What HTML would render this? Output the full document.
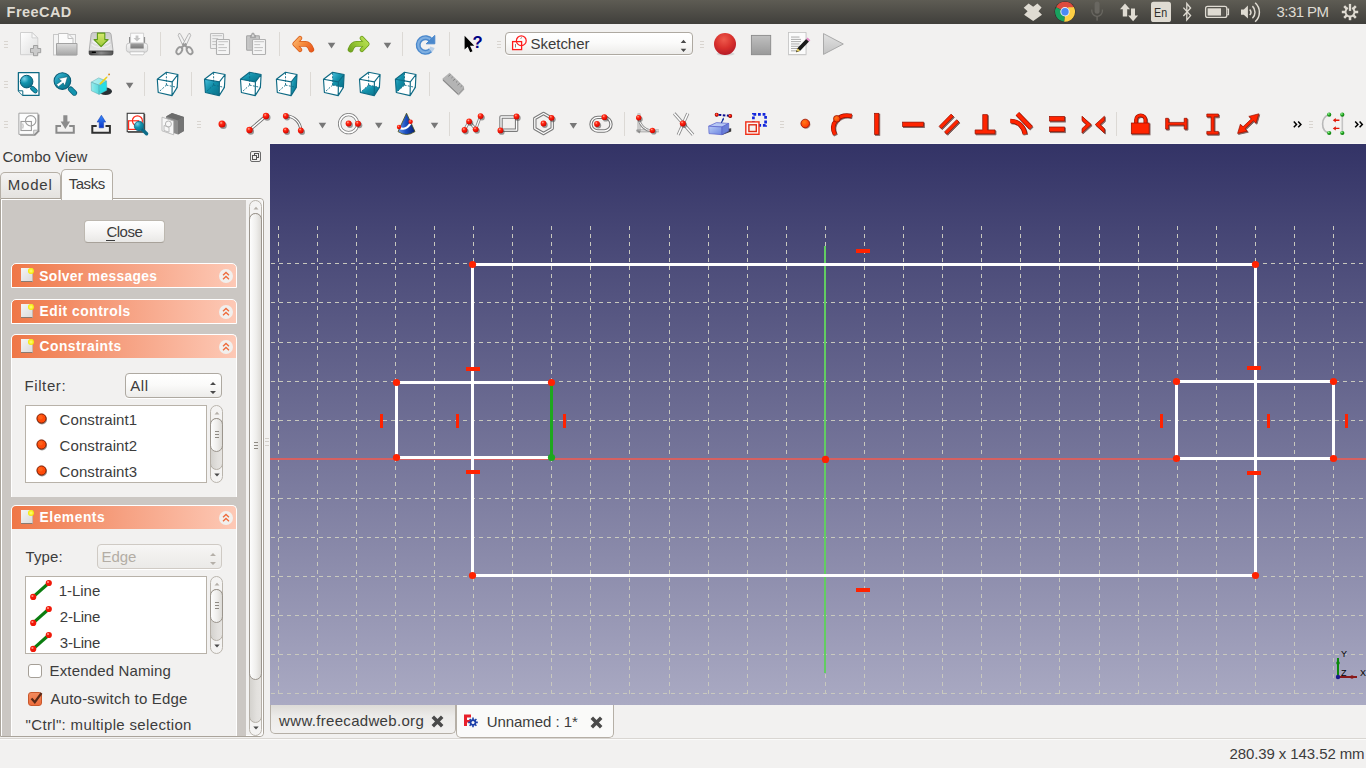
<!DOCTYPE html>
<html lang="en"><head><meta charset="utf-8"><title>FreeCAD</title>
<style>
html,body{margin:0;padding:0;width:1366px;height:768px;overflow:hidden;background:#f2f1f0;font-family:"Liberation Sans", sans-serif;}
#root{position:relative;width:1366px;height:768px;overflow:hidden;background:#f2f1f0}
#root div,#root svg,#root span{position:absolute;box-sizing:border-box}
.t{white-space:pre;line-height:1;font-family:"Liberation Sans", sans-serif}

.bar{left:0;top:0;width:1366px;height:24px;background:linear-gradient(#5e5c54,#403f3b);}
.hd{width:4px;height:1px;background:#d9d5d0}
.sep{width:1px;height:24px;background:#dcd9d5}
.combo{border:1px solid #aea9a1;border-radius:4px;background:linear-gradient(#ffffff,#fbfbfa 45%,#edecea);box-shadow:0 1px 0 #fff}
.btn{border:1px solid #bdb8b0;border-bottom-color:#a8a29a;border-radius:4px;background:linear-gradient(#ffffff,#f6f5f4 50%,#e9e8e6)}
.hdr{left:11px;width:226px;height:25px;border:1px solid #fff;border-bottom:0;border-radius:5px 5px 0 0;background:linear-gradient(90deg,#ef7747,#f6a182 50%,#fdc9b6)}
.hdrc{border-bottom:1px solid #fff;}
.grp{left:11px;width:226px;background:#f2f1f0;border-left:1px solid #fff;border-right:1px solid #fff}
.list{background:#fff;border:1px solid #b8b2a9}
.sb{border:1px solid #bab5ad;border-radius:7px;background:#f4f3f2}
.tr{border:1px solid #b4aea6;background:linear-gradient(90deg,#d4d2ce,#e2e0dd 60%,#e6e4e1)}
.sl{border:1px solid #9b958d;border-radius:6px;background:linear-gradient(90deg,#fdfdfd,#efeeec 55%,#dcdad6)}
.cb{width:14px;height:14px;border:1px solid #a59f97;border-radius:3px;background:#fff}

</style></head><body><div id="root">
<div class="bar"></div>
<div class="hd" style="left:4px;top:41px"></div>
<div class="hd" style="left:4px;top:44px"></div>
<div class="hd" style="left:4px;top:47px"></div>
<div class="hd" style="left:497px;top:41px"></div>
<div class="hd" style="left:497px;top:44px"></div>
<div class="hd" style="left:497px;top:47px"></div>
<div class="hd" style="left:700px;top:41px"></div>
<div class="hd" style="left:700px;top:44px"></div>
<div class="hd" style="left:700px;top:47px"></div>
<div class="hd" style="left:4px;top:81px"></div>
<div class="hd" style="left:4px;top:84px"></div>
<div class="hd" style="left:4px;top:87px"></div>
<div class="hd" style="left:4px;top:121px"></div>
<div class="hd" style="left:4px;top:124px"></div>
<div class="hd" style="left:4px;top:127px"></div>
<div class="hd" style="left:197px;top:121px"></div>
<div class="hd" style="left:197px;top:124px"></div>
<div class="hd" style="left:197px;top:127px"></div>
<div class="hd" style="left:780px;top:121px"></div>
<div class="hd" style="left:780px;top:124px"></div>
<div class="hd" style="left:780px;top:127px"></div>
<div class="hd" style="left:1309px;top:121px"></div>
<div class="hd" style="left:1309px;top:124px"></div>
<div class="hd" style="left:1309px;top:127px"></div>
<div class="sep" style="left:160px;top:32px"></div>
<div class="sep" style="left:279px;top:32px"></div>
<div class="sep" style="left:402px;top:32px"></div>
<div class="sep" style="left:449px;top:32px"></div>
<div class="sep" style="left:144px;top:72px"></div>
<div class="sep" style="left:191px;top:72px"></div>
<div class="sep" style="left:310px;top:72px"></div>
<div class="sep" style="left:429px;top:72px"></div>
<div class="sep" style="left:449px;top:112px"></div>
<div class="sep" style="left:624px;top:112px"></div>
<div class="sep" style="left:1116px;top:112px"></div>
<div class="combo" style="left:505px;top:32px;width:188px;height:23px"></div>
<div style="left:0;top:198px;width:264px;height:539px;border:1px solid #aaa49b;border-radius:0 4px 4px 0;background:#f2f1f0"></div>
<div style="left:1px;top:199px;width:262px;height:537px;border:1px solid #fff;border-radius:0 3px 3px 0;"></div>
<div style="left:2px;top:200px;width:244px;height:536px;background:#cbc7c3"></div>
<div style="left:0px;top:172px;width:61px;height:26px;border:1px solid #b5afa6;border-bottom:0;border-radius:5px 5px 0 0;background:linear-gradient(#f4f3f2,#e4e2df)"></div>
<div style="left:61px;top:169px;width:52px;height:31px;border:1px solid #b5afa6;border-bottom:0;border-radius:5px 5px 0 0;background:#fafaf9"></div>
<div style="left:250px;top:151px;width:11px;height:11px;border:1px solid #6a6a6a;border-radius:2px"></div>
<div style="left:254px;top:153px;width:5px;height:5px;border:1px solid #555;"></div>
<div style="left:252px;top:155px;width:5px;height:5px;border:1px solid #555;background:#f2f1f0"></div>
<div class="btn" style="left:84px;top:220px;width:81px;height:23px"></div>
<div style="left:106px;top:240px;width:9px;height:1px;background:#3c3c3c"></div>
<div class="hdr hdrc" style="top:263px;height:25px"></div>
<div style="left:21px;top:268px;width:12px;height:14px;background:linear-gradient(135deg,#f4f4f4,#dcdcdc);border-bottom:1px solid #8a7a70;border-right:1px solid #c8b8b0"></div>
<div style="left:28px;top:268px;width:6px;height:6px;border-radius:3px;background:radial-gradient(#ffff80,#f4e800 70%,#e8d000)"></div>
<div style="left:219px;top:269px;width:14px;height:14px;border-radius:7px;background:#f1efed"></div>
<svg style="left:219px;top:269px" width="14" height="14" viewBox="0 0 14 14"><path d="M4 6.2 L7 3.4 L10 6.2 M4 10.2 L7 7.4 L10 10.2" fill="none" stroke="#ee6b3b" stroke-width="1.3"/></svg>
<div class="hdr hdrc" style="top:299px;height:25px"></div>
<div style="left:21px;top:304px;width:12px;height:14px;background:linear-gradient(135deg,#f4f4f4,#dcdcdc);border-bottom:1px solid #8a7a70;border-right:1px solid #c8b8b0"></div>
<div style="left:28px;top:304px;width:6px;height:6px;border-radius:3px;background:radial-gradient(#ffff80,#f4e800 70%,#e8d000)"></div>
<div style="left:219px;top:305px;width:14px;height:14px;border-radius:7px;background:#f1efed"></div>
<svg style="left:219px;top:305px" width="14" height="14" viewBox="0 0 14 14"><path d="M4 6.2 L7 3.4 L10 6.2 M4 10.2 L7 7.4 L10 10.2" fill="none" stroke="#ee6b3b" stroke-width="1.3"/></svg>
<div class="hdr" style="top:334px;height:24px"></div>
<div style="left:21px;top:339px;width:12px;height:14px;background:linear-gradient(135deg,#f4f4f4,#dcdcdc);border-bottom:1px solid #8a7a70;border-right:1px solid #c8b8b0"></div>
<div style="left:28px;top:339px;width:6px;height:6px;border-radius:3px;background:radial-gradient(#ffff80,#f4e800 70%,#e8d000)"></div>
<div style="left:219px;top:340px;width:14px;height:14px;border-radius:7px;background:#f1efed"></div>
<svg style="left:219px;top:340px" width="14" height="14" viewBox="0 0 14 14"><path d="M4 6.2 L7 3.4 L10 6.2 M4 10.2 L7 7.4 L10 10.2" fill="none" stroke="#ee6b3b" stroke-width="1.3"/></svg>
<div class="hdr" style="top:505px;height:24px"></div>
<div style="left:21px;top:510px;width:12px;height:14px;background:linear-gradient(135deg,#f4f4f4,#dcdcdc);border-bottom:1px solid #8a7a70;border-right:1px solid #c8b8b0"></div>
<div style="left:28px;top:510px;width:6px;height:6px;border-radius:3px;background:radial-gradient(#ffff80,#f4e800 70%,#e8d000)"></div>
<div style="left:219px;top:511px;width:14px;height:14px;border-radius:7px;background:#f1efed"></div>
<svg style="left:219px;top:511px" width="14" height="14" viewBox="0 0 14 14"><path d="M4 6.2 L7 3.4 L10 6.2 M4 10.2 L7 7.4 L10 10.2" fill="none" stroke="#ee6b3b" stroke-width="1.3"/></svg>
<div class="grp" style="top:358px;height:139px"></div>
<div class="grp" style="top:529px;height:207px"></div>
<div class="combo" style="left:125px;top:373px;width:97px;height:25px"></div>
<svg style="left:209px;top:381px" width="8" height="14" viewBox="0 0 8 14"><path d="M1 4 L4 1 L7 4Z M1 10 L4 13 L7 10Z" fill="#4a4a4a"/></svg>
<div class="list" style="left:25px;top:405px;width:182px;height:78px"></div>
<div class="combo" style="left:97px;top:544px;width:125px;height:25px;border-color:#cfcac4;background:linear-gradient(#f7f6f5,#f1f0ee 45%,#ebeae8)"></div>
<svg style="left:209px;top:552px" width="8" height="14" viewBox="0 0 8 14"><path d="M1 4 L4 1 L7 4Z M1 10 L4 13 L7 10Z" fill="#b5b0a9"/></svg>
<div class="list" style="left:25px;top:576px;width:182px;height:78px"></div>
<div class="sb" style="left:210px;top:405px;width:13px;height:78px;border-radius:6.5px"></div>
<div class="tr" style="left:210px;top:418px;width:13px;height:52px;border-radius:6.5px"></div>
<div class="sl" style="left:210px;top:418px;width:13px;height:34px;border-radius:6.5px"></div>
<svg style="left:213.5px;top:411px" width="6" height="4" viewBox="0 0 6 4"><path d="M0.5 3.5 L3 0.8 L5.5 3.5Z" fill="#b4afa8"/></svg>
<svg style="left:213.5px;top:473px" width="6" height="4" viewBox="0 0 6 4"><path d="M0.3 0.5 L3 3.6 L5.7 0.5Z" fill="#4a4a4a"/></svg>
<div style="left:214.5px;top:431px;width:4px;height:1px;background:#8f8a83"></div>
<div style="left:214.5px;top:434px;width:4px;height:1px;background:#8f8a83"></div>
<div style="left:214.5px;top:437px;width:4px;height:1px;background:#8f8a83"></div>
<div class="sb" style="left:210px;top:576px;width:13px;height:78px;border-radius:6.5px"></div>
<div class="tr" style="left:210px;top:589px;width:13px;height:52px;border-radius:6.5px"></div>
<div class="sl" style="left:210px;top:589px;width:13px;height:34px;border-radius:6.5px"></div>
<svg style="left:213.5px;top:582px" width="6" height="4" viewBox="0 0 6 4"><path d="M0.5 3.5 L3 0.8 L5.5 3.5Z" fill="#b4afa8"/></svg>
<svg style="left:213.5px;top:644px" width="6" height="4" viewBox="0 0 6 4"><path d="M0.3 0.5 L3 3.6 L5.7 0.5Z" fill="#4a4a4a"/></svg>
<div style="left:214.5px;top:602px;width:4px;height:1px;background:#8f8a83"></div>
<div style="left:214.5px;top:605px;width:4px;height:1px;background:#8f8a83"></div>
<div style="left:214.5px;top:608px;width:4px;height:1px;background:#8f8a83"></div>
<div class="sb" style="left:249px;top:200px;width:13px;height:536px;border-radius:6.5px"></div>
<div class="tr" style="left:249px;top:213px;width:13px;height:510px;border-radius:6.5px"></div>
<div class="sl" style="left:249px;top:213px;width:13px;height:467px;border-radius:6.5px"></div>
<svg style="left:252.5px;top:206px" width="6" height="4" viewBox="0 0 6 4"><path d="M0.5 3.5 L3 0.8 L5.5 3.5Z" fill="#b4afa8"/></svg>
<svg style="left:252.5px;top:726px" width="6" height="4" viewBox="0 0 6 4"><path d="M0.3 0.5 L3 3.6 L5.7 0.5Z" fill="#4a4a4a"/></svg>
<div style="left:253.5px;top:442px;width:4px;height:1px;background:#8f8a83"></div>
<div style="left:253.5px;top:445px;width:4px;height:1px;background:#8f8a83"></div>
<div style="left:253.5px;top:448px;width:4px;height:1px;background:#8f8a83"></div>
<div style="left:265px;top:438px;width:4px;height:1px;background:#d3cfca"></div>
<div style="left:265px;top:441px;width:4px;height:1px;background:#d3cfca"></div>
<div style="left:265px;top:445px;width:4px;height:1px;background:#d3cfca"></div>
<div class="cb" style="left:28px;top:664px"></div>
<div class="cb" style="left:28px;top:692px;background:linear-gradient(#f28a5e,#ee6d3c);border-color:#c9582c"></div>
<svg style="left:28px;top:690px" width="16" height="16" viewBox="0 0 16 16"><path d="M3.5 8.5 L6.8 12.2 L13.5 3" fill="none" stroke="#5a2a18" stroke-width="2.2"/></svg>
<svg style="left:34px;top:410.8px" width="16" height="16" viewBox="0 0 16 16"><circle cx="8" cy="8.5" r="5" fill="#55504c" opacity=".6"/><circle cx="7.5" cy="7.5" r="4.6" fill="#ff4a08" stroke="#7a1c00" stroke-width="1"/><circle cx="6.5" cy="6.3" r="2.2" fill="#ff6a20" opacity=".7"/></svg>
<svg style="left:34px;top:436.8px" width="16" height="16" viewBox="0 0 16 16"><circle cx="8" cy="8.5" r="5" fill="#55504c" opacity=".6"/><circle cx="7.5" cy="7.5" r="4.6" fill="#ff4a08" stroke="#7a1c00" stroke-width="1"/><circle cx="6.5" cy="6.3" r="2.2" fill="#ff6a20" opacity=".7"/></svg>
<svg style="left:34px;top:462.8px" width="16" height="16" viewBox="0 0 16 16"><circle cx="8" cy="8.5" r="5" fill="#55504c" opacity=".6"/><circle cx="7.5" cy="7.5" r="4.6" fill="#ff4a08" stroke="#7a1c00" stroke-width="1"/><circle cx="6.5" cy="6.3" r="2.2" fill="#ff6a20" opacity=".7"/></svg>
<svg style="left:28px;top:577.1px" width="26" height="26" viewBox="0 0 26 26"><path d="M5.2 19.9 L20.8 6" stroke="#0b7d10" stroke-width="3.2"/><circle cx="5.2" cy="19.9" r="3.1" fill="#f01808"/><circle cx="20.8" cy="6" r="3.1" fill="#f01808"/><circle cx="4.4" cy="19" r="1.1" fill="#ff9080"/><circle cx="20" cy="5.1" r="1.1" fill="#ff9080"/></svg>
<svg style="left:28px;top:603.1px" width="26" height="26" viewBox="0 0 26 26"><path d="M5.2 19.9 L20.8 6" stroke="#0b7d10" stroke-width="3.2"/><circle cx="5.2" cy="19.9" r="3.1" fill="#f01808"/><circle cx="20.8" cy="6" r="3.1" fill="#f01808"/><circle cx="4.4" cy="19" r="1.1" fill="#ff9080"/><circle cx="20" cy="5.1" r="1.1" fill="#ff9080"/></svg>
<svg style="left:28px;top:629.1px" width="26" height="26" viewBox="0 0 26 26"><path d="M5.2 19.9 L20.8 6" stroke="#0b7d10" stroke-width="3.2"/><circle cx="5.2" cy="19.9" r="3.1" fill="#f01808"/><circle cx="20.8" cy="6" r="3.1" fill="#f01808"/><circle cx="4.4" cy="19" r="1.1" fill="#ff9080"/><circle cx="20" cy="5.1" r="1.1" fill="#ff9080"/></svg>
<div style="left:0;top:737px;width:270px;height:31px;background:#f2f1f0"></div>
<div style="left:0;top:738px;width:1366px;height:1px;background:#d9d6d2"></div>
<div style="left:0;top:739px;width:1366px;height:1px;background:#fbfbfa"></div>
<div style="left:270px;top:705px;width:186px;height:29px;border:1px solid #b5afa6;border-top:0;border-radius:0 0 5px 5px;background:linear-gradient(#dddbd7,#ecebe9 40%,#f2f1f0)"></div>
<div style="left:456px;top:705px;width:158px;height:33px;border:1px solid #b5afa6;border-top:0;border-radius:0 0 5px 5px;background:#fafaf9"></div>
<svg style="left:431px;top:715px" width="13" height="13" viewBox="0 0 13 13"><path d="M1.8 1.8 L11.2 11.2 M11.2 1.8 L1.8 11.2" stroke="#4a4a4a" stroke-width="3.5"/></svg>
<svg style="left:590px;top:715.5px" width="13" height="13" viewBox="0 0 13 13"><path d="M1.8 1.8 L11.2 11.2 M11.2 1.8 L1.8 11.2" stroke="#4a4a4a" stroke-width="3.5"/></svg>
<svg style="left:463px;top:713px" width="16" height="16" viewBox="0 0 16 16"><path d="M1 1.5 h7 v3 h-4 v2.5 h3 v2.5 h-3 v3.5 h-3z" fill="#e8202a"/><g fill="#1c3fa8"><circle cx="10" cy="9.4" r="3.2"/><g stroke="#1c3fa8" stroke-width="1.6"><path d="M10 4.6V14.2M5.2 9.4H14.8M6.6 6L13.4 12.8M13.4 6L6.6 12.8"/></g></g><circle cx="10" cy="9.4" r="1.5" fill="#fafaf9"/></svg>
<div style="left:270px;top:144px;width:1096px;height:561px;background:linear-gradient(#333366,#aaaac3)"></div>
<svg style="left:270px;top:144px" width="1096" height="561" viewBox="270 144 1096 561" shape-rendering="crispEdges">
<line x1="278.5" y1="226" x2="278.5" y2="694" stroke="#c8c8be" stroke-width="1" stroke-dasharray="4 4" opacity="1"/>
<line x1="317.5" y1="226" x2="317.5" y2="694" stroke="#c8c8be" stroke-width="1" stroke-dasharray="4 4" opacity="1"/>
<line x1="356.5" y1="226" x2="356.5" y2="694" stroke="#c8c8be" stroke-width="1" stroke-dasharray="4 4" opacity="1"/>
<line x1="395.5" y1="226" x2="395.5" y2="694" stroke="#c8c8be" stroke-width="1" stroke-dasharray="4 4" opacity="1"/>
<line x1="434.5" y1="226" x2="434.5" y2="694" stroke="#c8c8be" stroke-width="1" stroke-dasharray="4 4" opacity="1"/>
<line x1="473.5" y1="226" x2="473.5" y2="694" stroke="#c8c8be" stroke-width="1" stroke-dasharray="4 4" opacity="1"/>
<line x1="512.5" y1="226" x2="512.5" y2="694" stroke="#c8c8be" stroke-width="1" stroke-dasharray="4 4" opacity="1"/>
<line x1="551.5" y1="226" x2="551.5" y2="694" stroke="#c8c8be" stroke-width="1" stroke-dasharray="4 4" opacity="1"/>
<line x1="590.5" y1="226" x2="590.5" y2="694" stroke="#c8c8be" stroke-width="1" stroke-dasharray="4 4" opacity="1"/>
<line x1="629.5" y1="226" x2="629.5" y2="694" stroke="#c8c8be" stroke-width="1" stroke-dasharray="4 4" opacity="1"/>
<line x1="669.5" y1="226" x2="669.5" y2="694" stroke="#c8c8be" stroke-width="1" stroke-dasharray="4 4" opacity="1"/>
<line x1="708.5" y1="226" x2="708.5" y2="694" stroke="#c8c8be" stroke-width="1" stroke-dasharray="4 4" opacity="1"/>
<line x1="747.5" y1="226" x2="747.5" y2="694" stroke="#c8c8be" stroke-width="1" stroke-dasharray="4 4" opacity="1"/>
<line x1="786.5" y1="226" x2="786.5" y2="694" stroke="#c8c8be" stroke-width="1" stroke-dasharray="4 4" opacity="1"/>
<line x1="825.5" y1="226" x2="825.5" y2="694" stroke="#c8c8be" stroke-width="1" stroke-dasharray="4 4" opacity="1"/>
<line x1="864.5" y1="226" x2="864.5" y2="694" stroke="#c8c8be" stroke-width="1" stroke-dasharray="4 4" opacity="1"/>
<line x1="903.5" y1="226" x2="903.5" y2="694" stroke="#c8c8be" stroke-width="1" stroke-dasharray="4 4" opacity="1"/>
<line x1="942.5" y1="226" x2="942.5" y2="694" stroke="#c8c8be" stroke-width="1" stroke-dasharray="4 4" opacity="1"/>
<line x1="981.5" y1="226" x2="981.5" y2="694" stroke="#c8c8be" stroke-width="1" stroke-dasharray="4 4" opacity="1"/>
<line x1="1020.5" y1="226" x2="1020.5" y2="694" stroke="#c8c8be" stroke-width="1" stroke-dasharray="4 4" opacity="1"/>
<line x1="1059.5" y1="226" x2="1059.5" y2="694" stroke="#c8c8be" stroke-width="1" stroke-dasharray="4 4" opacity="1"/>
<line x1="1099.5" y1="226" x2="1099.5" y2="694" stroke="#c8c8be" stroke-width="1" stroke-dasharray="4 4" opacity="1"/>
<line x1="1138.5" y1="226" x2="1138.5" y2="694" stroke="#c8c8be" stroke-width="1" stroke-dasharray="4 4" opacity="1"/>
<line x1="1177.5" y1="226" x2="1177.5" y2="694" stroke="#c8c8be" stroke-width="1" stroke-dasharray="4 4" opacity="1"/>
<line x1="1216.5" y1="226" x2="1216.5" y2="694" stroke="#c8c8be" stroke-width="1" stroke-dasharray="4 4" opacity="1"/>
<line x1="1255.5" y1="226" x2="1255.5" y2="694" stroke="#c8c8be" stroke-width="1" stroke-dasharray="4 4" opacity="1"/>
<line x1="1294.5" y1="226" x2="1294.5" y2="694" stroke="#c8c8be" stroke-width="1" stroke-dasharray="4 4" opacity="1"/>
<line x1="1333.5" y1="226" x2="1333.5" y2="694" stroke="#c8c8be" stroke-width="1" stroke-dasharray="4 4" opacity="1"/>
<line x1="271" y1="263.5" x2="1366" y2="263.5" stroke="#c8c8be" stroke-width="1" stroke-dasharray="4 4" opacity="1"/>
<line x1="271" y1="302.5" x2="1366" y2="302.5" stroke="#c8c8be" stroke-width="1" stroke-dasharray="4 4" opacity="1"/>
<line x1="271" y1="342.5" x2="1366" y2="342.5" stroke="#c8c8be" stroke-width="1" stroke-dasharray="4 4" opacity="1"/>
<line x1="271" y1="381.5" x2="1366" y2="381.5" stroke="#c8c8be" stroke-width="1" stroke-dasharray="4 4" opacity="1"/>
<line x1="271" y1="420.5" x2="1366" y2="420.5" stroke="#c8c8be" stroke-width="1" stroke-dasharray="4 4" opacity="1"/>
<line x1="271" y1="459.5" x2="1366" y2="459.5" stroke="#c8c8be" stroke-width="1" stroke-dasharray="4 4" opacity="1"/>
<line x1="271" y1="498.5" x2="1366" y2="498.5" stroke="#c8c8be" stroke-width="1" stroke-dasharray="4 4" opacity="1"/>
<line x1="271" y1="537.5" x2="1366" y2="537.5" stroke="#c8c8be" stroke-width="1" stroke-dasharray="4 4" opacity="1"/>
<line x1="271" y1="576.5" x2="1366" y2="576.5" stroke="#c8c8be" stroke-width="1" stroke-dasharray="4 4" opacity="1"/>
<line x1="271" y1="615.5" x2="1366" y2="615.5" stroke="#c8c8be" stroke-width="1" stroke-dasharray="4 4" opacity="1"/>
<line x1="271" y1="654.5" x2="1366" y2="654.5" stroke="#c8c8be" stroke-width="1" stroke-dasharray="4 4" opacity="1"/>
<line x1="271" y1="693.5" x2="1366" y2="693.5" stroke="#c8c8be" stroke-width="1" stroke-dasharray="4 4" opacity="1"/>
<rect x="270" y="458" width="1096" height="2" fill="#d66060"/>
<rect x="824" y="246" width="2" height="427" fill="#62cc62"/>
<rect x="471" y="263.0" width="786" height="3" fill="#fff"/>
<rect x="471" y="574.0" width="786" height="3" fill="#fff"/>
<rect x="471.0" y="263" width="3" height="314" fill="#fff"/>
<rect x="1254.0" y="263" width="3" height="314" fill="#fff"/>
<rect x="395" y="381.0" width="158" height="3" fill="#fff"/>
<rect x="395" y="456.0" width="158" height="3" fill="#fff"/>
<rect x="395.0" y="381" width="3" height="78" fill="#fff"/>
<rect x="550.0" y="381" width="3" height="78" fill="#1ea81e"/>
<rect x="1175" y="380.0" width="160" height="3" fill="#fff"/>
<rect x="1175" y="457.0" width="160" height="3" fill="#fff"/>
<rect x="1175.0" y="380" width="3" height="80" fill="#fff"/>
<rect x="1332.0" y="380" width="3" height="80" fill="#fff"/>
<rect x="856" y="249" width="14" height="4" fill="#ff2200"/>
<rect x="856" y="588" width="14" height="4" fill="#ff2200"/>
<rect x="466" y="367" width="14" height="4" fill="#ff2200"/>
<rect x="466" y="470" width="14" height="4" fill="#ff2200"/>
<rect x="1247" y="366" width="14" height="4" fill="#ff2200"/>
<rect x="1247" y="471" width="14" height="4" fill="#ff2200"/>
<rect x="380" y="414" width="3" height="14" fill="#ff2200"/>
<rect x="456" y="414" width="3" height="14" fill="#ff2200"/>
<rect x="563" y="414" width="3" height="14" fill="#ff2200"/>
<rect x="1160" y="414" width="3" height="14" fill="#ff2200"/>
<rect x="1267" y="414" width="3" height="14" fill="#ff2200"/>
<rect x="1345" y="414" width="3" height="14" fill="#ff2200"/>
</svg>
<svg style="left:270px;top:144px" width="1096" height="561" viewBox="270 144 1096 561">
<circle cx="472.5" cy="264.5" r="3.6" fill="#ff2200"/>
<circle cx="1255.5" cy="264.5" r="3.6" fill="#ff2200"/>
<circle cx="472.5" cy="575.5" r="3.6" fill="#ff2200"/>
<circle cx="1255.5" cy="575.5" r="3.6" fill="#ff2200"/>
<circle cx="396.5" cy="382.5" r="3.6" fill="#ff2200"/>
<circle cx="551.5" cy="382.5" r="3.6" fill="#ff2200"/>
<circle cx="396.5" cy="457.5" r="3.6" fill="#ff2200"/>
<circle cx="551.5" cy="457.5" r="3.6" fill="#1ea81e"/>
<circle cx="1176.5" cy="381.5" r="3.6" fill="#ff2200"/>
<circle cx="1333.5" cy="381.5" r="3.6" fill="#ff2200"/>
<circle cx="1176.5" cy="458.5" r="3.6" fill="#ff2200"/>
<circle cx="1333.5" cy="458.5" r="3.6" fill="#ff2200"/>
<circle cx="825.5" cy="459.4" r="3.6" fill="#ff2200"/>
<rect x="1337" y="658" width="2" height="19" fill="#0a8a0a"/><rect x="1338" y="676" width="19" height="2" fill="#8a1818"/><circle cx="1338" cy="677" r="2.2" fill="#1a1a8a"/><circle cx="1338" cy="663" r="1.8" fill="#0a8a0a"/><circle cx="1352" cy="677" r="1.8" fill="#8a1818"/>
</svg>
<div style="left:269px;top:143px;width:1097px;height:1px;background:#f7f6f5"></div>
<svg style="left:0;top:0" width="1366" height="144" viewBox="0 0 1366 144">
<defs>
<radialGradient id="rb" cx=".38" cy=".32" r=".75"><stop offset="0" stop-color="#ffb0a0"/><stop offset=".3" stop-color="#ff2a14"/><stop offset=".8" stop-color="#e00800"/><stop offset="1" stop-color="#b00000"/></radialGradient>
<radialGradient id="gb" cx=".38" cy=".32" r=".75"><stop offset="0" stop-color="#b0ffb0"/><stop offset=".4" stop-color="#20a820"/><stop offset="1" stop-color="#0a700a"/></radialGradient>
<linearGradient id="pg" x1="0" y1="0" x2="1" y2="1"><stop offset="0" stop-color="#ffffff"/><stop offset="1" stop-color="#dedede"/></linearGradient>
<linearGradient id="fg" x1="0" y1="0" x2="0" y2="1"><stop offset="0" stop-color="#dcdcdc"/><stop offset="1" stop-color="#a6a6a6"/></linearGradient>
<linearGradient id="og" gradientUnits="userSpaceOnUse" x1="293" y1="36" x2="313" y2="52"><stop offset="0" stop-color="#fcc07a"/><stop offset=".5" stop-color="#f58a3c"/><stop offset="1" stop-color="#e8501a"/></linearGradient>
<linearGradient id="gg" gradientUnits="userSpaceOnUse" x1="293" y1="36" x2="313" y2="52"><stop offset="0" stop-color="#c4e860"/><stop offset=".5" stop-color="#9ccc38"/><stop offset="1" stop-color="#6ea01e"/></linearGradient>
<linearGradient id="ga" x1="0" y1="0" x2="0" y2="1"><stop offset="0" stop-color="#d8ea70"/><stop offset="1" stop-color="#9cc838"/></linearGradient>
<radialGradient id="rec" cx=".45" cy=".3" r=".8"><stop offset="0" stop-color="#ee5a4c"/><stop offset=".5" stop-color="#d8302c"/><stop offset="1" stop-color="#aa1426"/></radialGradient>
<linearGradient id="stp" x1="0" y1="0" x2="0" y2="1"><stop offset="0" stop-color="#c0c0c0"/><stop offset="1" stop-color="#9a9a9a"/></linearGradient>
<linearGradient id="ply" x1="0" y1="0" x2="0" y2="1"><stop offset="0" stop-color="#e2e2e2"/><stop offset="1" stop-color="#c2c2c2"/></linearGradient>
<radialGradient id="tl" cx=".32" cy=".28" r=".8"><stop offset="0" stop-color="#7cd4ec"/><stop offset=".45" stop-color="#1494ae"/><stop offset="1" stop-color="#0a6c86"/></radialGradient>
<linearGradient id="tf" x1="0" y1="0" x2="1" y2="1"><stop offset="0" stop-color="#4cc0de"/><stop offset=".45" stop-color="#1290aa"/><stop offset="1" stop-color="#0a7088"/></linearGradient>
<linearGradient id="bl" x1="0" y1="0" x2="1" y2="0"><stop offset="0" stop-color="#6a98ee"/><stop offset=".45" stop-color="#1c50c0"/><stop offset="1" stop-color="#061e70"/></linearGradient>
<linearGradient id="rf" x1="0" y1="0" x2="1" y2="1"><stop offset="0" stop-color="#3c7cc8"/><stop offset="1" stop-color="#7ab0e8"/></linearGradient>
<radialGradient id="co" cx=".4" cy=".35" r=".7"><stop offset="0" stop-color="#ff7a18"/><stop offset="1" stop-color="#ff3000"/></radialGradient>
<linearGradient id="hdd" x1="0" y1="0" x2="0" y2="1"><stop offset="0" stop-color="#cacaca"/><stop offset="1" stop-color="#e6e6e6"/></linearGradient>
<linearGradient id="hdf" x1="0" y1="0" x2="1" y2="0"><stop offset="0" stop-color="#3a3a3a"/><stop offset=".5" stop-color="#8c8c8c"/><stop offset="1" stop-color="#555"/></linearGradient>
<linearGradient id="bu" x1="0" y1="0" x2="0" y2="1"><stop offset="0" stop-color="#3a8cfa"/><stop offset="1" stop-color="#0a34c8"/></linearGradient>
<linearGradient id="xg" x1="0" y1="0" x2="1" y2="1"><stop offset="0" stop-color="#b8ccf6"/><stop offset="1" stop-color="#6c84e0"/></linearGradient>
<linearGradient id="c1" x1="0" y1="0" x2="1" y2="0"><stop offset="0" stop-color="#b4f0f0"/><stop offset="1" stop-color="#84e6e8"/></linearGradient><linearGradient id="c2" x1="0" y1="0" x2="1" y2="0"><stop offset="0" stop-color="#98eaea"/><stop offset="1" stop-color="#54dade"/></linearGradient><linearGradient id="c3" x1="0" y1="0" x2="1" y2="0"><stop offset="0" stop-color="#38d6de"/><stop offset="1" stop-color="#1ce2ea"/></linearGradient>
<linearGradient id="prb" x1="0" y1="0" x2="0" y2="1"><stop offset="0" stop-color="#f6f6f6"/><stop offset="1" stop-color="#dedede"/></linearGradient><linearGradient id="prs" x1="0" y1="0" x2="0" y2="1"><stop offset="0" stop-color="#a0a0a0"/><stop offset="1" stop-color="#787878"/></linearGradient>
</defs>
<path d="M1023.7 7.7 L1028.6 3.5 L1033.2 6.7 L1037.4 3.5 L1041.6 7.4 L1038.5 11.2 L1042 14.8 L1033.2 21.1 L1024.1 14.8 L1027.6 11.2Z" fill="#dfdbd2"/>
<circle cx="1065" cy="11.7" r="10.5" fill="#2a2926"/>
<path d="M1065 11.7 L1056.09 7.16 A10 10 0 0 1 1073.91 7.16Z" fill="#dd4b3e"/>
<path d="M1065 11.7 L1073.91 7.16 A10 10 0 0 1 1064.13 21.66Z" fill="#fdcf45"/>
<path d="M1065 11.7 L1064.13 21.66 A10 10 0 0 1 1056.09 7.16Z" fill="#19a15f"/>
<path d="M1068 7.299999999999999 L1073.91 7.16 L1074.40 8.28 L1069 11.7Z" fill="#fdcf45"/>
<circle cx="1065" cy="11.7" r="4.7" fill="#f1f1f1"/><circle cx="1065" cy="11.7" r="3.7" fill="#4a8af5"/>
<rect x="1094.6" y="1.6" width="5" height="12.2" rx="2.5" fill="#696761"/><path d="M1091.8 9.5 v1.5 a5.3 5.3 0 0 0 10.6 0 v-1.5" fill="none" stroke="#696761" stroke-width="1.3"/><rect x="1096.4" y="16" width="1.4" height="4.6" fill="#696761"/>
<path d="M1125 3.5 L1130 9.2 L1127.2 9.2 L1127.2 16.5 L1122.8 16.5 L1122.8 9.2 L1120 9.2Z" fill="#dfdbd2"/>
<path d="M1133.1 21.2 L1138.1 15.6 L1135 15.6 L1135 8.4 L1131 8.4 L1131 15.6 L1128.1 15.6Z" fill="#dfdbd2"/>
<rect x="1151" y="1.8" width="20" height="20.2" rx="2.6" fill="#dfdbd2"/>
<path d="M1183.4 7.6 L1190.6 15.6 L1186.8 20 L1186.8 3.6 L1190.6 8 L1183.4 16" fill="none" stroke="#dfdbd2" stroke-width="1.3" stroke-linejoin="miter"/>
<rect x="1205.6" y="6.4" width="21.2" height="11" rx="2" fill="none" stroke="#dfdbd2" stroke-width="1.3"/><rect x="1207.6" y="8.3" width="13.4" height="7.3" fill="#dfdbd2"/><rect x="1221" y="8.3" width="3.9" height="7.3" fill="#5a5852"/><path d="M1227.3 9.2 h1.2 v5.4 h-1.2" fill="none" stroke="#dfdbd2" stroke-width="1.2"/>
<path d="M1241 9.5 L1243.8 9.5 L1247.9 5.6 L1247.9 18.6 L1243.8 14.8 L1241 14.8Z" fill="#dfdbd2"/>
<path d="M1249.72 9.39 A4.2 4.2 0 0 1 1249.72 15.01" fill="none" stroke="#dfdbd2" stroke-width="1.5"/>
<path d="M1252.44 6.16 A8.4 8.4 0 0 1 1252.44 18.24" fill="none" stroke="#dfdbd2" stroke-width="1.5"/>
<path d="M1255.16 2.69 A12.8 12.8 0 0 1 1255.16 21.71" fill="none" stroke="#dfdbd2" stroke-width="1.5"/>
<rect x="1354.2" y="10.75" width="4" height="2.5" fill="#dfdbd2" transform="rotate(0 1350 12)"/>
<rect x="1354.2" y="10.75" width="4" height="2.5" fill="#dfdbd2" transform="rotate(45 1350 12)"/>
<rect x="1354.2" y="10.75" width="4" height="2.5" fill="#dfdbd2" transform="rotate(90 1350 12)"/>
<rect x="1354.2" y="10.75" width="4" height="2.5" fill="#dfdbd2" transform="rotate(135 1350 12)"/>
<rect x="1354.2" y="10.75" width="4" height="2.5" fill="#dfdbd2" transform="rotate(180 1350 12)"/>
<rect x="1354.2" y="10.75" width="4" height="2.5" fill="#dfdbd2" transform="rotate(225 1350 12)"/>
<rect x="1354.2" y="10.75" width="4" height="2.5" fill="#dfdbd2" transform="rotate(315 1350 12)"/>
<path d="M1352.11 8.03 A4.5 4.5 0 1 1 1347.89 8.03" fill="none" stroke="#dfdbd2" stroke-width="1.9"/>
<rect x="1348.85" y="3.9" width="2.3" height="7" fill="#dfdbd2"/>
<path d="M20.5 32.5 h11.5 l5.8 5.4 v16.8 h-17.3z" fill="url(#pg)" stroke="#d0d0d0"/><path d="M32 32.5 v5.4 h5.8z" fill="#f9f9f9" stroke="#d0d0d0" stroke-linejoin="round"/>
<path d="M33.5 45.5 h4.2 v3 h3 v4.2 h-3 v3 h-4.2 v-3 h-3 v-4.2 h3z" fill="#cacaca" stroke="#9a9a9a" stroke-width=".9" stroke-linejoin="round"/>
<rect x="53.5" y="34.5" width="22" height="20.5" fill="#f4f4f4" stroke="#c8c8c8"/><path d="M58.5 33.5 h9.5 l5 5 v14 h-14.5z" fill="#fbfbfb" stroke="#c2c2c2"/><path d="M68 33.5 v5 h5" fill="none" stroke="#c2c2c2"/>
<path d="M56.5 43.5 h20.5 v11.5 h-20.5z" fill="url(#fg)" stroke="#a2a2a2"/>
<path d="M93.4 32.5 h15.4 q2 0 2.3 2 l2 16.6 h-24 l2 -16.6 q.3 -2 2.3 -2z" fill="url(#hdd)" stroke="#a8a8a8" stroke-width=".9"/><path d="M92.4 40.5 a9.4 5.6 0 0 0 17.4 0" fill="none" stroke="#f4f4f4" stroke-width="1.4"/><path d="M91.8 44 a9.6 4.6 0 0 0 18.6 0" fill="none" stroke="#efefef" stroke-width="1.2"/>
<path d="M89.1 51 h23.9 v2.2 q0 1.9 -1.9 1.9 h-20.1 q-1.9 0 -1.9 -1.9z" fill="url(#hdf)" stroke="#444" stroke-width=".7"/><rect x="91.6" y="51.6" width="4.4" height="1.3" rx=".6" fill="#000"/>
<path d="M97.4 33.1 h7.4 v6.5 h3.3 l-7 7.1 l-7 -7.1 h3.3z" fill="url(#ga)" stroke="#5c9a16" stroke-width="1.1" stroke-linejoin="round"/>
<rect x="129" y="37" width="1.6" height="6" fill="#8c8c8c"/><rect x="143.5" y="37" width="1.6" height="6" fill="#8c8c8c"/>
<path d="M130.6 33.2 h13 v10 h-13z" fill="#fcfcfc" stroke="#c8c8c8" stroke-width=".8"/><path d="M135.6 35.6 h2.8 v2.4 h2.1 l-3.5 3.6 l-3.5 -3.6 h2.1z" fill="#c6c6c6"/>
<rect x="126.4" y="43.2" width="21.2" height="9" rx="2.6" fill="url(#prb)" stroke="#c2c2c2" stroke-width=".9"/><rect x="130.4" y="43.4" width="13.3" height="5.1" fill="url(#prs)"/>
<path d="M130 51.8 h14.2 v1.4 q0 1.6 -1.6 1.6 h-11 q-1.6 0 -1.6 -1.6z" fill="#fdfdfd" stroke="#bcbcbc" stroke-width=".8"/>
<path d="M179.4 33 L178.2 35.4 L183 45.8 L185.8 43.8 L180.6 34.4Z" fill="#f2f2f2" stroke="#a6a6a6" stroke-width=".8" stroke-linejoin="round"/><g transform="translate(368.9 0) scale(-1 1)"><path d="M179.4 33 L178.2 35.4 L183 45.8 L185.8 43.8 L180.6 34.4Z" fill="#f2f2f2" stroke="#a6a6a6" stroke-width=".8" stroke-linejoin="round"/></g>
<path d="M186.4 43.6 L181.6 47.4 M182.5 43.6 L187.3 47.4" stroke="#9a9a9a" stroke-width="2" fill="none"/>
<ellipse cx="179.3" cy="50.6" rx="2.5" ry="3.8" fill="none" stroke="#9a9a9a" stroke-width="1.9" transform="rotate(30 179.3 50.6)"/><ellipse cx="189.6" cy="50.6" rx="2.5" ry="3.8" fill="none" stroke="#9a9a9a" stroke-width="1.9" transform="rotate(-30 189.6 50.6)"/>
<rect x="210.5" y="33.5" width="13" height="15" rx=".8" fill="#f0f0f0" stroke="#bdbdbd" stroke-width="1.1"/>
<rect x="212.3" y="35.20" width="9.7" height="1" fill="#c2c2c2"/>
<rect x="212.3" y="38.15" width="5.9" height="1" fill="#c2c2c2"/>
<rect x="212.3" y="41.10" width="8.7" height="1" fill="#c2c2c2"/>
<rect x="212.3" y="44.05" width="7.8" height="1" fill="#c2c2c2"/>
<rect x="216.5" y="39.5" width="13" height="15" rx=".8" fill="#f5f5f5" stroke="#b0b0b0" stroke-width="1.1"/>
<rect x="218.3" y="41.20" width="9.7" height="1" fill="#c2c2c2"/>
<rect x="218.3" y="44.15" width="5.9" height="1" fill="#c2c2c2"/>
<rect x="218.3" y="47.10" width="8.7" height="1" fill="#c2c2c2"/>
<rect x="218.3" y="50.05" width="7.8" height="1" fill="#c2c2c2"/>
<rect x="246.6" y="35.7" width="12.8" height="14.6" rx=".8" fill="#c2c2c2" stroke="#a8a8a8" stroke-width="1.1"/><rect x="248" y="37.2" width="10" height="11.6" fill="none" stroke="#cecece" stroke-width=".7"/><path d="M250.4 37.6 v-2.2 h1 l.6 -2.2 h1.9 l.6 2.2 h1 v2.2z" fill="#ababab" stroke="#9a9a9a" stroke-width=".7"/><path d="M251.8 36.6 l1.15 -2.6 l1.15 2.6z" fill="#ededed"/>
<rect x="252.5" y="39.5" width="13" height="15" rx=".8" fill="#f5f5f5" stroke="#b0b0b0" stroke-width="1.1"/>
<rect x="254.3" y="41.20" width="9.7" height="1" fill="#c2c2c2"/>
<rect x="254.3" y="44.15" width="5.9" height="1" fill="#c2c2c2"/>
<rect x="254.3" y="47.10" width="8.7" height="1" fill="#c2c2c2"/>
<rect x="254.3" y="50.05" width="7.8" height="1" fill="#c2c2c2"/>
<path d="M300 38.2 L294.6 44 L300 49.8" fill="none" stroke="#d85c1a" stroke-width="4.6" stroke-linecap="round" stroke-linejoin="round"/><path d="M296 43.9 H305.4 Q309.3 43.9 311.3 49.5" fill="none" stroke="#d85c1a" stroke-width="5.8" stroke-linecap="round"/><path d="M300 38.2 L294.6 44 L300 49.8" fill="none" stroke="url(#og)" stroke-width="3" stroke-linecap="round" stroke-linejoin="round"/><path d="M296 43.9 H305.4 Q309.3 43.9 311.3 49.5" fill="none" stroke="url(#og)" stroke-width="4.2" stroke-linecap="round"/>
<g transform="translate(661.9 0) scale(-1 1)"><path d="M300 38.2 L294.6 44 L300 49.8" fill="none" stroke="#6c9c1e" stroke-width="4.6" stroke-linecap="round" stroke-linejoin="round"/><path d="M296 43.9 H305.4 Q309.3 43.9 311.3 49.5" fill="none" stroke="#6c9c1e" stroke-width="5.8" stroke-linecap="round"/><path d="M300 38.2 L294.6 44 L300 49.8" fill="none" stroke="url(#gg)" stroke-width="3" stroke-linecap="round" stroke-linejoin="round"/><path d="M296 43.9 H305.4 Q309.3 43.9 311.3 49.5" fill="none" stroke="url(#gg)" stroke-width="4.2" stroke-linecap="round"/></g>
<path d="M327.8 42.7 h7.5 l-3.75 5.7Z" fill="#777777"/>
<path d="M383.7 42.7 h7.5 l-3.75 5.7Z" fill="#777777"/>
<path d="M430.38 50.42 A7.3 7.3 0 0 0 432.44 47.26" fill="none" stroke="#8ab4e2" stroke-width="4.6" opacity=".55"/>
<path d="M431.41 40.71 A7.3 7.3 0 1 0 430.38 50.42" fill="none" stroke="#4a88cc" stroke-width="4.9"/>
<path d="M431.41 40.71 A7.3 7.3 0 1 0 430.38 50.42" fill="none" stroke="#7eaee0" stroke-width="2.2"/>
<path d="M434.8 35.4 L434.8 43.8 L426.2 43.8Z" fill="#4a88cc" stroke="#4a88cc" stroke-width="1" stroke-linejoin="round"/>
<path d="M464.6 35.8 L464.6 49.6 L467.7 46.7 L470.2 52.2 L472.5 51.2 L470 45.8 L474.3 45.8Z" fill="#000"/>
<rect x="512.6" y="41.6" width="9" height="8" fill="#fff" stroke="#ff1c1c" stroke-width="1.3"/><circle cx="521.3" cy="40.7" r="4.9" fill="none" stroke="#ff1c1c" stroke-width="1.2"/><path d="M515.5 44 v3.5 M520.5 38.5 l1.5 -1" stroke="#888" stroke-width="1"/>
<path d="M680.7 43 h5.6 l-2.8 -3.2Z M680.7 48.8 h5.6 l-2.8 3.2Z" fill="#4a4a4a"/>
<ellipse cx="725.5" cy="54" rx="9" ry="1.6" fill="#bbb" opacity=".5"/><circle cx="725" cy="44" r="11" fill="url(#rec)"/>
<rect x="751.4" y="35.4" width="19.3" height="19.3" fill="url(#stp)" stroke="#8a8a8a" stroke-width=".9"/>
<rect x="788" y="33" width="18.4" height="22.4" fill="#c8c8c8" opacity=".6"/><rect x="788.4" y="32.4" width="17.6" height="22" fill="#fbfbfb" stroke="#c2c2c2" stroke-width=".8"/>
<rect x="791" y="36.6" width="8.5" height=".9" fill="#a4a4a4"/>
<rect x="791" y="38.9" width="10" height=".9" fill="#a4a4a4"/>
<rect x="791" y="41.2" width="10" height=".9" fill="#a4a4a4"/>
<rect x="791" y="43.5" width="8.5" height=".9" fill="#a4a4a4"/>
<rect x="791" y="45.8" width="10" height=".9" fill="#a4a4a4"/>
<rect x="791" y="48.1" width="10" height=".9" fill="#a4a4a4"/>
<rect x="791" y="50.4" width="8.5" height=".9" fill="#a4a4a4"/>
<path d="M796.2 52.2 L797.4 48.2 L806.2 39 L809 41.6 L800.2 50.8Z" fill="#1a1a1a"/><path d="M796.2 52.2 L797.4 48.2 L800.2 50.8Z" fill="#e8d060"/><path d="M796.2 52.2 l.5 -1.6 l1.1 1Z" fill="#222"/><path d="M806.2 39 L807.6 37.6 L810.4 40.2 L809 41.6Z" fill="#e48cc8"/>
<path d="M823.5 33.6 L843.3 44 L823.5 54.4Z" fill="url(#ply)" stroke="#a4a4a4" stroke-width=".9"/>
<path d="M18.4 72.6 h20.6 v22.8 h-16.2 l-4.4 -4.6z" fill="#fff" stroke="#0e6a84" stroke-width="1.3" stroke-linejoin="round"/><path d="M18.4 90.8 h4.4 v4.6" fill="#fff" stroke="#0e6a84" stroke-width="1"/>
<path d="M32.4 88.2 L35.4 91" stroke="#0a5c76" stroke-width="4.6" stroke-linecap="round"/><path d="M32.4 88.2 L35.4 91" stroke="#1494ae" stroke-width="3.2" stroke-linecap="round"/><circle cx="26.6" cy="81.6" r="6.3" fill="url(#tl)" stroke="#0a5c76" stroke-width="1"/>
<path d="M70.6 89.2 L74.4 93" stroke="#0a5c76" stroke-width="5.4" stroke-linecap="round"/><path d="M70.6 89.2 L74.4 93" stroke="#1494ae" stroke-width="3.9" stroke-linecap="round"/><circle cx="62.4" cy="81.1" r="8.3" fill="url(#tf)" stroke="#0a5c76" stroke-width="1.1"/>
<path d="M67.6 76.7 L58.4 78.6 L61.4 80.9 L56.4 84.6 L58.4 86.8 L63.2 82.9 L64.8 86Z" fill="#fff" stroke="#0a5a70" stroke-width=".6" stroke-linejoin="round"/>
<ellipse cx="105.6" cy="91.3" rx="6.4" ry="3.7" fill="#2a3034"/>
<path d="M91.2 82.2 L98.7 77.9 L106.6 81.1 L99.1 85.2Z" fill="url(#c1)" stroke="#58a4ac" stroke-width=".5"/><path d="M91.2 82.2 L99.1 85.2 L99.1 94.4 L91.4 90.8Z" fill="url(#c2)" stroke="#58a4ac" stroke-width=".5"/><path d="M99.1 85.2 L106.6 81.1 L106.8 90.3 L99.1 94.4Z" fill="url(#c3)" stroke="#58a4ac" stroke-width=".5"/>
<path d="M107 77 L108.4 75.2" stroke="#d8d8d8" stroke-width=".8"/><path d="M99.9 84.1 L107 77" stroke="#eed012" stroke-width="1.6"/><circle cx="109.1" cy="74.4" r=".95" fill="#d88a20"/>
<path d="M125.9 82.7 h7.5 l-3.75 5.7Z" fill="#777777"/>
<polygon points="157.3,79.2 166.4,72.3 177.9,74.5 177.2,87.4 172.0,95.6 158.2,92.5" fill="#fff"/>
<path d="M166.4,85.1 L166.4,72.3 M166.4,85.1 L158.2,92.5 M166.4,85.1 L177.2,87.4" stroke="#0e6a84" stroke-width=".9" stroke-dasharray="2 1.4" fill="none"/>
<path d="M157.3,79.2 L166.4,72.3 L177.9,74.5 L177.2,87.4 L172.0,95.6 L158.2,92.5Z M157.3,79.2 L172.2,81.9 L177.9,74.5 M172.2,81.9 L172.0,95.6" stroke="#0e6a84" stroke-width="1.15" fill="none" stroke-linejoin="round"/>
<polygon points="204.5,79.2 213.6,72.3 225.1,74.5 224.4,87.4 219.2,95.6 205.4,92.5" fill="#fff"/>
<polygon points="204.5,79.2 219.4,81.9 219.2,95.6 205.4,92.5" fill="url(#tf)"/>
<path d="M213.6,85.1 L213.6,72.3 M213.6,85.1 L205.4,92.5 M213.6,85.1 L224.4,87.4" stroke="#0e6a84" stroke-width=".9" stroke-dasharray="2 1.4" fill="none"/>
<path d="M204.5,79.2 L213.6,72.3 L225.1,74.5 L224.4,87.4 L219.2,95.6 L205.4,92.5Z M204.5,79.2 L219.4,81.9 L225.1,74.5 M219.4,81.9 L219.2,95.6" stroke="#0e6a84" stroke-width="1.15" fill="none" stroke-linejoin="round"/>
<polygon points="240.5,79.2 249.6,72.3 261.1,74.5 260.4,87.4 255.2,95.6 241.4,92.5" fill="#fff"/>
<polygon points="240.5,79.2 249.6,72.3 261.1,74.5 255.4,81.9" fill="url(#tf)"/>
<path d="M249.6,85.1 L249.6,72.3 M249.6,85.1 L241.4,92.5 M249.6,85.1 L260.4,87.4" stroke="#0e6a84" stroke-width=".9" stroke-dasharray="2 1.4" fill="none"/>
<path d="M240.5,79.2 L249.6,72.3 L261.1,74.5 L260.4,87.4 L255.2,95.6 L241.4,92.5Z M240.5,79.2 L255.4,81.9 L261.1,74.5 M255.4,81.9 L255.2,95.6" stroke="#0e6a84" stroke-width="1.15" fill="none" stroke-linejoin="round"/>
<polygon points="276.4,79.2 285.5,72.3 297.0,74.5 296.3,87.4 291.1,95.6 277.3,92.5" fill="#fff"/>
<polygon points="291.3,81.9 297.0,74.5 296.3,87.4 291.1,95.6" fill="url(#tf)"/>
<path d="M285.5,85.1 L285.5,72.3 M285.5,85.1 L277.3,92.5 M285.5,85.1 L296.3,87.4" stroke="#0e6a84" stroke-width=".9" stroke-dasharray="2 1.4" fill="none"/>
<path d="M276.4,79.2 L285.5,72.3 L297.0,74.5 L296.3,87.4 L291.1,95.6 L277.3,92.5Z M276.4,79.2 L291.3,81.9 L297.0,74.5 M291.3,81.9 L291.1,95.6" stroke="#0e6a84" stroke-width="1.15" fill="none" stroke-linejoin="round"/>
<polygon points="323.5,79.2 332.6,72.3 344.1,74.5 343.4,87.4 338.2,95.6 324.4,92.5" fill="#fff"/>
<polygon points="332.6,72.3 344.1,74.5 343.4,87.4 332.6,85.1" fill="url(#tf)"/>
<path d="M332.6,85.1 L332.6,72.3 M332.6,85.1 L324.4,92.5 M332.6,85.1 L343.4,87.4" stroke="#0e6a84" stroke-width=".9" stroke-dasharray="2 1.4" fill="none"/>
<path d="M323.5,79.2 L332.6,72.3 L344.1,74.5 L343.4,87.4 L338.2,95.6 L324.4,92.5Z M323.5,79.2 L338.4,81.9 L344.1,74.5 M338.4,81.9 L338.2,95.6" stroke="#0e6a84" stroke-width="1.15" fill="none" stroke-linejoin="round"/>
<polygon points="359.5,79.2 368.6,72.3 380.1,74.5 379.4,87.4 374.2,95.6 360.4,92.5" fill="#fff"/>
<polygon points="360.4,92.5 374.2,95.6 379.4,87.4 368.6,85.1" fill="url(#tf)"/>
<path d="M368.6,85.1 L368.6,72.3 M368.6,85.1 L360.4,92.5 M368.6,85.1 L379.4,87.4" stroke="#0e6a84" stroke-width=".9" stroke-dasharray="2 1.4" fill="none"/>
<path d="M359.5,79.2 L368.6,72.3 L380.1,74.5 L379.4,87.4 L374.2,95.6 L360.4,92.5Z M359.5,79.2 L374.4,81.9 L380.1,74.5 M374.4,81.9 L374.2,95.6" stroke="#0e6a84" stroke-width="1.15" fill="none" stroke-linejoin="round"/>
<polygon points="395.4,79.2 404.5,72.3 416.0,74.5 415.3,87.4 410.1,95.6 396.3,92.5" fill="#fff"/>
<polygon points="395.4,79.2 404.5,72.3 404.5,85.1 396.3,92.5" fill="url(#tf)"/>
<path d="M404.5,85.1 L404.5,72.3 M404.5,85.1 L396.3,92.5 M404.5,85.1 L415.3,87.4" stroke="#0e6a84" stroke-width=".9" stroke-dasharray="2 1.4" fill="none"/>
<path d="M395.4,79.2 L404.5,72.3 L416.0,74.5 L415.3,87.4 L410.1,95.6 L396.3,92.5Z M395.4,79.2 L410.3,81.9 L416.0,74.5 M410.3,81.9 L410.1,95.6" stroke="#0e6a84" stroke-width="1.15" fill="none" stroke-linejoin="round"/>
<path d="M442.6 78.4 L449.6 72.8 L464 86.6 L458 93Z" fill="#b4b4b4"/><path d="M442.6 78.4 L458 93 L458.6 95.6 L442.9 80.8Z" fill="#8a8a8a"/><path d="M458 93 L464 86.6 L464.2 89.4 L458.6 95.6Z" fill="#a2a2a2"/>
<path d="M450.5 74.6 l-2.2 1.8" stroke="#787878" stroke-width=".8"/>
<path d="M452.8 76.8 l-1.4 1.2" stroke="#787878" stroke-width=".8"/>
<path d="M455.1 79.0 l-2.2 1.8" stroke="#787878" stroke-width=".8"/>
<path d="M457.4 81.2 l-1.4 1.2" stroke="#787878" stroke-width=".8"/>
<path d="M459.7 83.4 l-2.2 1.8" stroke="#787878" stroke-width=".8"/>
<path d="M462.0 85.6 l-1.4 1.2" stroke="#787878" stroke-width=".8"/>
<path d="M20.2 114.6 h19.2 v17 l-4.2 4.2 h-15z" fill="#8e8e8e"/><path d="M18.9 113.2 h19 v17 l-4.2 4.2 h-14.8z" fill="#fdfdfd" stroke="#a2a2a2" stroke-width="1"/><path d="M37.9 130.2 h-4.2 v4.2" fill="#e4e4e4" stroke="#a2a2a2" stroke-width=".8"/><circle cx="30.7" cy="120.8" r="5.2" fill="none" stroke="#9c9c9c" stroke-width="1.1"/><rect x="21" y="121.5" width="10.4" height="9" fill="none" stroke="#9c9c9c" stroke-width="1.1"/><path d="M22.6 123.5 q1.2 2.5 0 5" stroke="#c4c4c4" stroke-width="1.4" fill="none"/>
<path d="M61 125.9 h-4.6 v6.9 h17.4 v-6.9 h-4.6" fill="none" stroke="#8a8a8a" stroke-width="2"/><path d="M63.3 115.2 h4.1 v6.3 h2.7 l-4.75 7.5 l-4.75 -7.5 h2.7z" fill="#8c8c8c"/>
<path d="M96.7 125.9 h-4.4 v6.9 h17.6 v-6.9 h-4.4" fill="none" stroke="#303030" stroke-width="2"/><path d="M101.4 115.2 l4.3 6.9 h-2.1 v5.7 h-4.4 v-5.7 h-2.1z" fill="url(#bu)" stroke="#0a34b0" stroke-width=".5"/>
<rect x="128" y="114" width="17.2" height="18.8" fill="#555"/><rect x="127.2" y="113.3" width="16.8" height="18.4" fill="#fff" stroke="#3c3c3c" stroke-width="1.1"/><circle cx="137.4" cy="120.8" r="5" fill="none" stroke="#ff2a1a" stroke-width="1.2"/><rect x="128.6" y="120.8" width="10" height="8.6" fill="none" stroke="#ff2a1a" stroke-width="1.2"/>
<path d="M142.4 129.6 L146.6 133.8" stroke="#0c6c88" stroke-width="3.4" stroke-linecap="round"/><circle cx="139.1" cy="126.1" r="4.8" fill="url(#tl)" stroke="#0a5c76" stroke-width=".7"/>
<path d="M166 116.6 L172 113 L184 117 L184 131 L178 134.6 L166 130.4Z" fill="#8c8c8c"/><path d="M178 120.6 L184 117 L184 131 L178 134.6Z" fill="#747474"/><path d="M166 116.6 L172 113 L184 117 L178 120.6Z" fill="#6c6c6c"/>
<path d="M162 117.2 L173.6 121 L173.6 134.8 L162 130.8Z" fill="#f7f7f7" stroke="#b8b8b8" stroke-width=".9"/><circle cx="168.4" cy="124" r="3" fill="none" stroke="#b4b4b4"/><path d="M164 125.5 l5 1.7 v5 l-5 -1.7z" fill="none" stroke="#b4b4b4" stroke-width=".9"/>
<circle cx="223.3" cy="125.6" r="3.5" fill="#4a4a4a" opacity=".55"/>
<circle cx="222" cy="124.1" r="3.5" fill="url(#rb)"/>
<path d="M249.5 130 L266 116" fill="none" stroke="#6c6c6c" stroke-width="3.2" stroke-linejoin="round"/><path d="M249.5 130 L266 116" fill="none" stroke="#fff" stroke-width="1.5" stroke-linejoin="round"/>
<circle cx="250.8" cy="131.5" r="3.2" fill="#4a4a4a" opacity=".55"/>
<circle cx="249.5" cy="130" r="3.2" fill="url(#rb)"/>
<circle cx="267.3" cy="117.5" r="3.2" fill="#4a4a4a" opacity=".55"/>
<circle cx="266" cy="116" r="3.2" fill="url(#rb)"/>
<path d="M285.8 116 A14.7 14.7 0 0 1 300.8 130.5" fill="none" stroke="#6c6c6c" stroke-width="3" stroke-linejoin="round"/><path d="M285.8 116 A14.7 14.7 0 0 1 300.8 130.5" fill="none" stroke="#fff" stroke-width="1.3" stroke-linejoin="round"/>
<circle cx="287.1" cy="117.5" r="2.9" fill="#4a4a4a" opacity=".55"/>
<circle cx="285.8" cy="116" r="2.9" fill="url(#rb)"/>
<circle cx="287.1" cy="132.0" r="2.9" fill="#4a4a4a" opacity=".55"/>
<circle cx="285.8" cy="130.5" r="2.9" fill="url(#rb)"/>
<circle cx="302.1" cy="132.0" r="2.9" fill="#4a4a4a" opacity=".55"/>
<circle cx="300.8" cy="130.5" r="2.9" fill="url(#rb)"/>
<path d="M318.7 122.7 h7.5 l-3.75 5.7Z" fill="#777777"/>
<path d="M375 122.7 h7.5 l-3.75 5.7Z" fill="#777777"/>
<path d="M430.8 122.7 h7.5 l-3.75 5.7Z" fill="#777777"/>
<path d="M339.6 123.7 a9 9 0 1 0 18 0 a9 9 0 1 0 -18 0" fill="none" stroke="#7c7c7c" stroke-width="3.3" stroke-linejoin="round"/><path d="M339.6 123.7 a9 9 0 1 0 18 0 a9 9 0 1 0 -18 0" fill="none" stroke="#fff" stroke-width="1.7" stroke-linejoin="round"/>
<circle cx="349.90000000000003" cy="125.0" r="3" fill="#4a4a4a" opacity=".55"/>
<circle cx="348.6" cy="123.5" r="3" fill="url(#rb)"/>
<circle cx="359.3" cy="125.2" r="3" fill="#4a4a4a" opacity=".55"/>
<circle cx="358" cy="123.7" r="3" fill="url(#rb)"/>
<path d="M406.5 113.2 L415 131.6 Q406.5 137.4 398 131.6Z" fill="url(#bl)" stroke="#4a5018" stroke-width=".8"/><path d="M400 128 Q406.4 131 411 122.6" fill="none" stroke="#fff" stroke-width="2.1"/>
<circle cx="399" cy="127" r="2.2" fill="url(#rb)"/>
<circle cx="410.6" cy="121.8" r="2.2" fill="url(#rb)"/>
<path d="M464.5 130 L469.1 121.4 L475.7 129.3 L480.6 116.1" fill="none" stroke="#8a8a8a" stroke-width="3" stroke-linejoin="round"/><path d="M464.5 130 L469.1 121.4 L475.7 129.3 L480.6 116.1" fill="none" stroke="#fff" stroke-width="1.2" stroke-linejoin="round"/>
<circle cx="465.8" cy="131.5" r="2.9" fill="#4a4a4a" opacity=".55"/>
<circle cx="464.5" cy="130" r="2.9" fill="url(#rb)"/>
<circle cx="470.40000000000003" cy="122.9" r="2.9" fill="#4a4a4a" opacity=".55"/>
<circle cx="469.1" cy="121.4" r="2.9" fill="url(#rb)"/>
<circle cx="477.0" cy="130.8" r="2.9" fill="#4a4a4a" opacity=".55"/>
<circle cx="475.7" cy="129.3" r="2.9" fill="url(#rb)"/>
<circle cx="481.90000000000003" cy="117.6" r="2.9" fill="#4a4a4a" opacity=".55"/>
<circle cx="480.6" cy="116.1" r="2.9" fill="url(#rb)"/>
<path d="M501 117 h15.6 v13.2 h-15.6z" fill="none" stroke="#7a7a7a" stroke-width="3.4" stroke-linejoin="round"/><path d="M501 117 h15.6 v13.2 h-15.6z" fill="none" stroke="#fff" stroke-width="1.3" stroke-linejoin="round"/>
<circle cx="501.7" cy="131.9" r="2.9" fill="#4a4a4a" opacity=".55"/>
<circle cx="500.4" cy="130.4" r="2.9" fill="url(#rb)"/>
<circle cx="517.8" cy="118.0" r="2.9" fill="#4a4a4a" opacity=".55"/>
<circle cx="516.5" cy="116.5" r="2.9" fill="url(#rb)"/>
<path d="M543.5 113.5 L552.2 118.5 L552.2 128.5 L543.5 133.5 L534.8 128.5 L534.8 118.5Z" fill="none" stroke="#7a7a7a" stroke-width="3.4" stroke-linejoin="round"/><path d="M543.5 113.5 L552.2 118.5 L552.2 128.5 L543.5 133.5 L534.8 128.5 L534.8 118.5Z" fill="none" stroke="#fff" stroke-width="1.3" stroke-linejoin="round"/>
<circle cx="544.8" cy="125.0" r="2.9" fill="#4a4a4a" opacity=".55"/>
<circle cx="543.5" cy="123.5" r="2.9" fill="url(#rb)"/>
<circle cx="552.8" cy="119.3" r="2.9" fill="#4a4a4a" opacity=".55"/>
<circle cx="551.5" cy="117.8" r="2.9" fill="url(#rb)"/>
<path d="M569.6 123 h7.5 l-3.75 5.7Z" fill="#777777"/>
<path d="M597.8 117.4 h6.4 a6.8 6.8 0 0 1 0 13.6 h-6.4 a6.8 6.8 0 0 1 0 -13.6z" fill="none" stroke="#7a7a7a" stroke-width="3.4" stroke-linejoin="round"/><path d="M597.8 117.4 h6.4 a6.8 6.8 0 0 1 0 13.6 h-6.4 a6.8 6.8 0 0 1 0 -13.6z" fill="none" stroke="#fff" stroke-width="1.3" stroke-linejoin="round"/>
<circle cx="598.3" cy="125.5" r="2.9" fill="#4a4a4a" opacity=".55"/>
<circle cx="597" cy="124" r="2.9" fill="url(#rb)"/>
<circle cx="605.6999999999999" cy="118.7" r="2.9" fill="#4a4a4a" opacity=".55"/>
<circle cx="604.4" cy="117.2" r="2.9" fill="url(#rb)"/>
<path d="M639 113.4 V131.4" fill="none" stroke="#8a8a8a" stroke-width="2.7" stroke-linejoin="round"/><path d="M639 113.4 V131.4" fill="none" stroke="#fff" stroke-width="1.1" stroke-linejoin="round"/>
<path d="M636.6 130.9 H658.8" fill="none" stroke="#8a8a8a" stroke-width="2.7" stroke-linejoin="round"/><path d="M636.6 130.9 H658.8" fill="none" stroke="#fff" stroke-width="1.1" stroke-linejoin="round"/>
<path d="M636 130 l3.4 3.6 l1.6 -3.2z" fill="#8a8a8a"/>
<path d="M639 117.6 A13.4 13.4 0 0 0 652.5 130.8" fill="none" stroke="#8a8a8a" stroke-width="2.6" stroke-linejoin="round"/><path d="M639 117.6 A13.4 13.4 0 0 0 652.5 130.8" fill="none" stroke="#fff" stroke-width="1.0" stroke-linejoin="round"/>
<circle cx="640.0" cy="119.2" r="2.7" fill="#4a4a4a" opacity=".55"/>
<circle cx="638.7" cy="117.7" r="2.7" fill="url(#rb)"/>
<circle cx="653.6999999999999" cy="131.9" r="2.7" fill="#4a4a4a" opacity=".55"/>
<circle cx="652.4" cy="130.4" r="2.7" fill="url(#rb)"/>
<path d="M674.2 113.4 L693 134.8" fill="none" stroke="#8a8a8a" stroke-width="3.2" stroke-linejoin="round"/><path d="M674.2 113.4 L693 134.8" fill="none" stroke="#fff" stroke-width="1.5" stroke-linejoin="round"/>
<path d="M687.8 113.4 L678.2 134.8" fill="none" stroke="#8a8a8a" stroke-width="3.2" stroke-linejoin="round"/><path d="M687.8 113.4 L678.2 134.8" fill="none" stroke="#fff" stroke-width="1.5" stroke-linejoin="round"/>
<circle cx="684.0999999999999" cy="124.9" r="3" fill="#4a4a4a" opacity=".55"/>
<circle cx="682.8" cy="123.4" r="3" fill="url(#rb)"/>
<path d="M722 134.9 L731.2 131.6 L731.2 128.2 L722 129.4Z" fill="#3a3a3a"/>
<path d="M708.7 126.2 L716.4 122.6 L728.7 123.4 L722 127Z" fill="#b6c8f4" stroke="#5860cc" stroke-width=".7" stroke-linejoin="round"/><path d="M708.7 126.2 L722 127 L722 134.7 L709 133.6Z" fill="url(#xg)" stroke="#5860cc" stroke-width=".7" stroke-linejoin="round"/><path d="M722 127 L728.7 123.4 L728.7 131.1 L722 134.7Z" fill="#6a80d8" stroke="#5860cc" stroke-width=".7" stroke-linejoin="round"/>
<path d="M716.7 114.7 L730.2 115.9" stroke="#0a0a90" stroke-width="2" stroke-dasharray="2.6 1.5" stroke-dashoffset="-2"/><path d="M721.4 122.8 L723.2 119.2" stroke="#1030a0" stroke-width="1.2"/><path d="M724 117.6 l-2.2 1.6 l1.9 1z" fill="#1030a0"/>
<circle cx="716.7" cy="114.7" r="2" fill="#6a1010"/><circle cx="730.2" cy="115.9" r="2" fill="#6a1010"/>
<circle cx="716.7" cy="114.7" r="1.6" fill="url(#rb)"/>
<circle cx="730.2" cy="115.9" r="1.6" fill="url(#rb)"/>
<rect x="753.4" y="114.4" width="12.2" height="10.9" fill="none" stroke="#1226dc" stroke-width="2.7" stroke-dasharray="2.8 1.8"/>
<rect x="745.8" y="121.9" width="13.2" height="12.4" fill="#fdf6f4" stroke="#f03018" stroke-width="1.4"/><rect x="748.9" y="124.8" width="7.4" height="6.7" fill="#f4f2f0" stroke="#de2a12" stroke-width="1.4"/>
<circle cx="806" cy="124.4" r="4.4" fill="#5a1a10" opacity=".45"/><circle cx="805.2" cy="123.5" r="4.3" fill="url(#co)" stroke="#981000" stroke-width=".8"/>
<path d="M835 134.6 C829.4 123.6 838.6 113.2 851.6 116" transform="translate(.9 1)" opacity=".6" fill="none" stroke="#3a0a08" stroke-width="4.2"/>
<path d="M835 134.6 C829.4 123.6 838.6 113.2 851.6 116" fill="none" stroke="#981000" stroke-width="4.4"/><path d="M835 134.6 C829.4 123.6 838.6 113.2 851.6 116" fill="none" stroke="#ff2400" stroke-width="3.1"/>
<circle cx="836.8" cy="118.8" r="3.3" fill="url(#co)" stroke="#981000" stroke-width=".8"/>
<g transform="translate(.9 1)" opacity=".6" fill="#3a0a08" stroke="#3a0a08"><rect x="874.6" y="113.3" width="4.2" height="21"/></g>
<g fill="#ff2400" stroke="#981000" stroke-width=".7" stroke-linejoin="miter"><rect x="874.6" y="113.3" width="4.2" height="21"/></g>
<g transform="translate(.9 1)" opacity=".6" fill="#3a0a08" stroke="#3a0a08"><rect x="902.6" y="122.1" width="20.8" height="4.4"/></g>
<g fill="#ff2400" stroke="#981000" stroke-width=".7" stroke-linejoin="miter"><rect x="902.6" y="122.1" width="20.8" height="4.4"/></g>
<g transform="translate(.9 1)" opacity=".6" fill="#3a0a08" stroke="#3a0a08"><path d="M939.1 126.3 L951.1 114.1 L953.45 116.45 L941.45 128.65Z"/><path d="M944.5 131.9 L956.7 119.7 L959.05 122.05 L946.85 134.25Z"/></g>
<g fill="#ff2400" stroke="#981000" stroke-width=".7" stroke-linejoin="miter"><path d="M939.1 126.3 L951.1 114.1 L953.45 116.45 L941.45 128.65Z"/><path d="M944.5 131.9 L956.7 119.7 L959.05 122.05 L946.85 134.25Z"/></g>
<g transform="translate(.9 1)" opacity=".6" fill="#3a0a08" stroke="#3a0a08"><path d="M982.7 114.6 h4.7 v15.3 h7.6 v3.9 h-19.9 v-3.9 h7.6z"/></g>
<g fill="#ff2400" stroke="#981000" stroke-width=".7" stroke-linejoin="miter"><path d="M982.7 114.6 h4.7 v15.3 h7.6 v3.9 h-19.9 v-3.9 h7.6z"/></g>
<path d="M1017.4 113.8 L1031 127.8" transform="translate(.9 1)" opacity=".6" fill="none" stroke="#3a0a08" stroke-width="4.7"/>
<path d="M1017.4 113.8 L1031 127.8" fill="none" stroke="#981000" stroke-width="4.9"/><path d="M1017.4 113.8 L1031 127.8" fill="none" stroke="#ff2400" stroke-width="3.6"/>
<path d="M1010.4 121 C1018.4 121 1023.8 126.6 1025 134.2" transform="translate(.9 1)" opacity=".6" fill="none" stroke="#3a0a08" stroke-width="4.5"/>
<path d="M1010.4 121 C1018.4 121 1023.8 126.6 1025 134.2" fill="none" stroke="#981000" stroke-width="4.7"/><path d="M1010.4 121 C1018.4 121 1023.8 126.6 1025 134.2" fill="none" stroke="#ff2400" stroke-width="3.4000000000000004"/>
<g transform="translate(.9 1)" opacity=".6" fill="#3a0a08" stroke="#3a0a08"><rect x="1049.6" y="116.4" width="14.8" height="4.6"/><rect x="1049.6" y="127" width="14.8" height="4.6"/></g>
<g fill="#ff2400" stroke="#981000" stroke-width=".7" stroke-linejoin="miter"><rect x="1049.6" y="116.4" width="14.8" height="4.6"/><rect x="1049.6" y="127" width="14.8" height="4.6"/></g>
<g transform="translate(.9 1)" opacity=".6" fill="#3a0a08" stroke="#3a0a08"><path d="M1082 116.2 L1091.2 124.6 L1082 133 L1082 128.6 L1086.4 124.6 L1082 120.6Z"/><path d="M1104.4 116.2 L1095.2 124.6 L1104.4 133 L1104.4 128.6 L1100 124.6 L1104.4 120.6Z"/></g>
<g fill="#ff2400" stroke="#981000" stroke-width=".7" stroke-linejoin="miter"><path d="M1082 116.2 L1091.2 124.6 L1082 133 L1082 128.6 L1086.4 124.6 L1082 120.6Z"/><path d="M1104.4 116.2 L1095.2 124.6 L1104.4 133 L1104.4 128.6 L1100 124.6 L1104.4 120.6Z"/></g>
<path d="M1136 123.4 v-3.4 a4.7 4.7 0 0 1 9.4 0 v3.4" transform="translate(.9 1)" opacity=".6" fill="none" stroke="#3a0a08" stroke-width="3.5999999999999996"/>
<path d="M1136 123.4 v-3.4 a4.7 4.7 0 0 1 9.4 0 v3.4" fill="none" stroke="#981000" stroke-width="3.8"/><path d="M1136 123.4 v-3.4 a4.7 4.7 0 0 1 9.4 0 v3.4" fill="none" stroke="#ff2400" stroke-width="2.5"/>
<g transform="translate(.9 1)" opacity=".6" fill="#3a0a08" stroke="#3a0a08"><rect x="1131.3" y="123" width="17.8" height="10.8"/></g>
<g fill="#ff2400" stroke="#981000" stroke-width=".7" stroke-linejoin="miter"><rect x="1131.3" y="123" width="17.8" height="10.8"/></g>
<g transform="translate(.9 1)" opacity=".6" fill="#3a0a08" stroke="#3a0a08"><path d="M1165.6 118.3 h2.8 v4.1 h15.8 v-4.1 h2.8 v10.8 h-2.8 v-4.1 h-15.8 v4.1 h-2.8z"/></g>
<g fill="#ff2400" stroke="#981000" stroke-width=".7" stroke-linejoin="miter"><path d="M1165.6 118.3 h2.8 v4.1 h15.8 v-4.1 h2.8 v10.8 h-2.8 v-4.1 h-15.8 v4.1 h-2.8z"/></g>
<g transform="translate(.9 1)" opacity=".6" fill="#3a0a08" stroke="#3a0a08"><path d="M1206.8 114 h11.6 v2.8 h-4.3 v14.6 h4.3 v2.8 h-11.6 v-2.8 h4.3 v-14.6 h-4.3z"/></g>
<g fill="#ff2400" stroke="#981000" stroke-width=".7" stroke-linejoin="miter"><path d="M1206.8 114 h11.6 v2.8 h-4.3 v14.6 h4.3 v2.8 h-11.6 v-2.8 h4.3 v-14.6 h-4.3z"/></g>
<g transform="translate(.9 1)" opacity=".6" fill="#3a0a08" stroke="#3a0a08"><path d="M1237.6 133.4 L1240.4 124.2 L1243 126.8 L1251.4 118.8 L1248.8 116.4 L1258.8 113.8 L1256 123.2 L1253.4 120.8 L1245 128.8 L1247.4 131.2Z"/></g>
<g fill="#ff2400" stroke="#981000" stroke-width=".7" stroke-linejoin="miter"><path d="M1237.6 133.4 L1240.4 124.2 L1243 126.8 L1251.4 118.8 L1248.8 116.4 L1258.8 113.8 L1256 123.2 L1253.4 120.8 L1245 128.8 L1247.4 131.2Z"/></g>
<path d="M1293.8 121.6 l2.7 2.8 l-2.7 2.8 M1298.2 121.6 l2.7 2.8 l-2.7 2.8" fill="none" stroke="#000" stroke-width="1.5"/>
<path d="M1355.2 121.6 l2.7 2.8 l-2.7 2.8 M1359.6000000000001 121.6 l2.7 2.8 l-2.7 2.8" fill="none" stroke="#000" stroke-width="1.5"/>
<path d="M1329.2 114.7 C1320.4 117 1320.4 130.8 1329.2 133" fill="none" stroke="#b8b8b8" stroke-width="1.6"/><path d="M1342.3 114.7 V133" stroke="#c4c4c4" stroke-width="1.6"/>
<path d="M1339.4 119.5 h-3.6 v-1.5 l-3 2.2 l3 2.2 v-1.5 h3.6z" fill="#e01808"/>
<path d="M1339.4 127.7 h-3.6 v-1.5 l-3 2.2 l3 2.2 v-1.5 h3.6z" fill="#e01808"/>
<circle cx="1329.2" cy="114.7" r="2.1" fill="url(#gb)"/>
<circle cx="1342.3" cy="114.7" r="2.1" fill="url(#gb)"/>
<circle cx="1329.2" cy="133" r="2.1" fill="url(#gb)"/>
<circle cx="1342.3" cy="133" r="2.1" fill="url(#gb)"/>
</svg>
<span class="t" style="left:6.60px;top:4.93px;font-size:14.5px;color:#dfdbd2;letter-spacing:0.438px;font-weight:bold;">FreeCAD</span><span class="t" style="left:1154.04px;top:7.00px;font-size:12.4px;color:#2e2d2a;transform:scaleX(0.8623);transform-origin:0 0;">En</span><span class="t" style="left:1276.50px;top:4.30px;font-size:15px;color:#dfdbd2;letter-spacing:-0.561px;">3:31 PM</span><span class="t" style="left:530.50px;top:36.10px;font-size:15px;color:#3c3c3c;letter-spacing:-0.028px;">Sketcher</span><span class="t" style="left:2.50px;top:149.40px;font-size:15px;color:#3c3c3c;letter-spacing:0.008px;">Combo View</span><span class="t" style="left:7.80px;top:177.30px;font-size:15px;color:#3c3c3c;letter-spacing:0.795px;">Model</span><span class="t" style="left:68.70px;top:176.10px;font-size:15px;color:#3c3c3c;letter-spacing:-0.461px;">Tasks</span><span class="t" style="left:106.40px;top:224.10px;font-size:15px;color:#3c3c3c;letter-spacing:-0.477px;">Close</span><span class="t" style="left:39.30px;top:269.52px;font-size:13.8px;color:#ffffff;letter-spacing:0.352px;font-weight:bold;">Solver messages</span><span class="t" style="left:39.50px;top:305.42px;font-size:13.8px;color:#ffffff;letter-spacing:0.530px;font-weight:bold;">Edit controls</span><span class="t" style="left:39.50px;top:340.42px;font-size:13.8px;color:#ffffff;letter-spacing:0.502px;font-weight:bold;">Constraints</span><span class="t" style="left:39.50px;top:511.42px;font-size:13.8px;color:#ffffff;letter-spacing:0.547px;font-weight:bold;">Elements</span><span class="t" style="left:24.40px;top:378.10px;font-size:15px;color:#3c3c3c;letter-spacing:0.628px;">Filter:</span><span class="t" style="left:130.20px;top:378.00px;font-size:15px;color:#3c3c3c;letter-spacing:0.631px;">All</span><span class="t" style="left:59.60px;top:412.00px;font-size:15px;color:#3c3c3c;letter-spacing:0.074px;">Constraint1</span><span class="t" style="left:59.60px;top:438.00px;font-size:15px;color:#3c3c3c;letter-spacing:0.074px;">Constraint2</span><span class="t" style="left:59.60px;top:464.00px;font-size:15px;color:#3c3c3c;letter-spacing:0.074px;">Constraint3</span><span class="t" style="left:25.40px;top:549.00px;font-size:15px;color:#3c3c3c;letter-spacing:0.170px;">Type:</span><span class="t" style="left:101.60px;top:549.00px;font-size:15px;color:#b3ada5;letter-spacing:-0.130px;">Edge</span><span class="t" style="left:58.80px;top:583.30px;font-size:15px;color:#3c3c3c;letter-spacing:-0.051px;">1-Line</span><span class="t" style="left:59.80px;top:609.30px;font-size:15px;color:#3c3c3c;letter-spacing:-0.251px;">2-Line</span><span class="t" style="left:59.80px;top:635.30px;font-size:15px;color:#3c3c3c;letter-spacing:-0.251px;">3-Line</span><span class="t" style="left:49.50px;top:662.80px;font-size:15px;color:#3c3c3c;letter-spacing:0.157px;">Extended Naming</span><span class="t" style="left:50.50px;top:690.90px;font-size:15px;color:#3c3c3c;letter-spacing:0.197px;">Auto-switch to Edge</span><span class="t" style="left:25.60px;top:716.80px;font-size:15px;color:#3c3c3c;letter-spacing:0.339px;">"Ctrl": multiple selection</span><span class="t" style="left:279.10px;top:713.00px;font-size:15px;color:#3c3c3c;letter-spacing:0.318px;">www.freecadweb.org</span><span class="t" style="left:486.70px;top:714.00px;font-size:15px;color:#3c3c3c;letter-spacing:-0.044px;">Unnamed : 1*</span><span class="t" style="left:1229.50px;top:746.30px;font-size:15px;color:#3c3c3c;letter-spacing:-0.097px;">280.39 x 143.52 mm</span><span class="t" style="left:1341.00px;top:650.08px;font-size:9px;color:#000;">Y</span><span class="t" style="left:1341.00px;top:668.88px;font-size:9px;color:#000;">Z</span><span class="t" style="left:1360.00px;top:668.88px;font-size:9px;color:#000;">X</span><span class="t" style="left:472.60px;top:34.85px;font-size:16.6px;color:#000084;font-weight:bold;">?</span>
</div></body></html>
